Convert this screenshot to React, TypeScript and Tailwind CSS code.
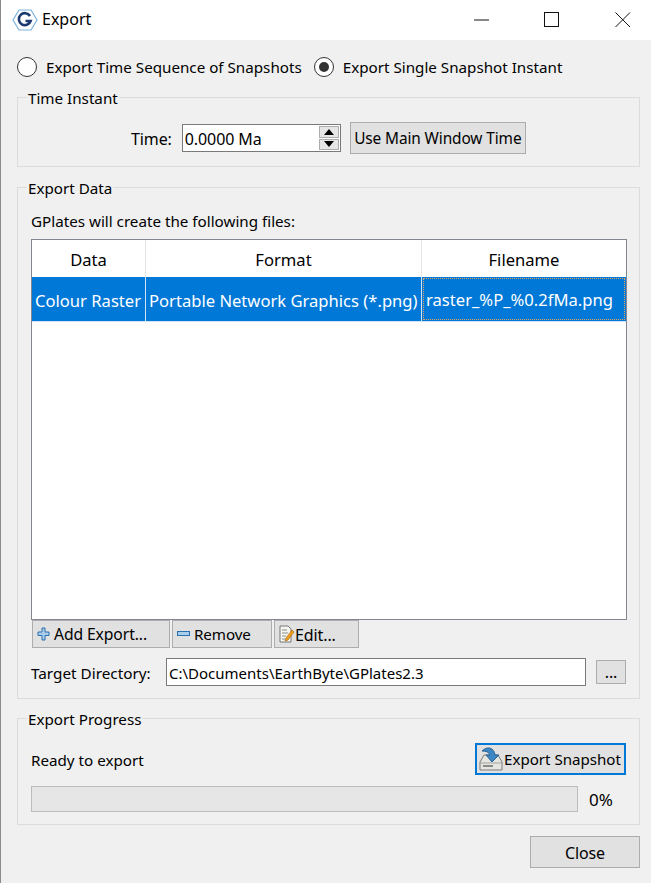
import React from 'react';

const btn = "flex items-center whitespace-nowrap bg-[#e1e1e1] border border-[#adadad] leading-none text-black tracking-[-0.1px]";

const GroupBox = ({ title, className, children }: { title: string; className: string; children: React.ReactNode }) => (
  <fieldset className={`border border-[#dcdcdc] ${className}`}>
    <legend className="ml-[9px] px-[1px] text-[15.2px] leading-[20px]">
      <span className="block translate-y-[1px]">{title}</span>
    </legend>
    {children}
  </fieldset>
);

const Radio = ({ checked }: { checked?: boolean }) => (
  <span className="w-[20px] h-[20px] rounded-full border border-[#333333] bg-white flex items-center justify-center shrink-0">
    {checked && <span className="w-[10px] h-[10px] rounded-full bg-[#333333]" />}
  </span>
);

const GLogo = () => (
  <svg width="26" height="22" viewBox="0 0 26 22" fill="none">
    <path d="M7 1 H19 L25 11 L19 21 H7 L1 11 Z" stroke="#7fb2dc" strokeWidth="1.2" fill="white" />
    <path d="M18 7 A6 6 0 1 0 18.6 12 H13.5" stroke="#1c3a70" strokeWidth="2.6" />
  </svg>
);

const ExportIcon = () => (
  <svg width="24" height="26" viewBox="0 0 24 26" className="shrink-0">
    <path d="M1 16 L5 9 H19 L23 16 V24 H1 Z" fill="#e6e6e0" stroke="#7a7a7a" />
    <path d="M1 17 H23" stroke="#a0a0a0" />
    <path d="M4 20 H14" stroke="#8a8a8a" strokeWidth="2" />
    <path d="M3 5 C8 0 15 1 16 9 H20 L13 16 L7 9 H11 C10 6 7 5 3 5 Z" fill="#3d87c4" stroke="#2a6496" />
  </svg>
);

const EditIcon = () => (
  <svg width="16" height="18" viewBox="0 0 16 18" className="shrink-0">
    <path d="M1 1 H9 L12 4 V17 H1 Z" fill="#f7f7f2" stroke="#777777" />
    <path d="M3 5 H8 M3 8 H9 M3 11 H7 M3 14 H6" stroke="#8a8a8a" />
    <path d="M7 13 L13 5 L15 7 L9 15 L6 16 Z" fill="#f0a020" stroke="#a86a10" strokeWidth="0.7" />
  </svg>
);

export default function App() {
  return (
    <div className="w-[651px] h-[883px] bg-[#f0f0f0] text-black text-[15.2px] font-['Noto_Sans','Open_Sans',sans-serif] overflow-hidden border-l border-[#8a8a8a]">
      {/* title bar */}
      <div className="h-[40px] bg-white flex items-center pl-[11px]">
        <GLogo />
        <span className="ml-[4px] text-[16px] mb-[2px]">Export</span>
        <div className="ml-auto flex items-center">
          <svg width="16" height="16" viewBox="0 0 16 16" className="mr-[54px]"><path d="M0 8 H15" stroke="#111" /></svg>
          <svg width="16" height="16" viewBox="0 0 16 16" className="mr-[55px]"><rect x="0.5" y="0.5" width="14" height="14" fill="none" stroke="#111" /></svg>
          <svg width="16" height="16" viewBox="0 0 16 16" className="mr-[20px]"><path d="M0.5 0.5 L15 15 M15 0.5 L0.5 15" stroke="#111" /></svg>
        </div>
      </div>

      {/* mode radios */}
      <div className="flex items-center h-[20px] mt-[17px] ml-[16px]">
        <Radio />
        <span className="ml-[9px] whitespace-nowrap">Export Time Sequence of Snapshots</span>
        <span className="ml-[12px]"><Radio checked /></span>
        <span className="ml-[9px] whitespace-nowrap">Export Single Snapshot Instant</span>
      </div>

      <GroupBox title="Time Instant" className="ml-[16px] mr-[11px] mt-[10px] h-[80px]">
        <div className="flex items-center mt-[15px] text-[16px] tracking-[-0.1px]">
          <span className="ml-[113px] pt-[2px]">Time:</span>
          <div className="ml-[10px] w-[159px] h-[28px] border border-[#7a7a7a] bg-white flex items-center">
            <span className="ml-[2px] pt-[2px]">0.0000 Ma</span>
            <div className="ml-auto mr-[1px] w-[20px] h-[24px] flex flex-col gap-[1px]">
              <div className="flex-1 bg-[#e6e6e6] border border-[#adadad] flex items-center justify-center">
                <span className="w-0 h-0 border-x-[5px] border-x-transparent border-b-[6px] border-b-black" />
              </div>
              <div className="flex-1 bg-[#e6e6e6] border border-[#adadad] flex items-center justify-center">
                <span className="w-0 h-0 border-x-[5px] border-x-transparent border-t-[6px] border-t-black" />
              </div>
            </div>
          </div>
          <button className={`${btn} ml-[9px] w-[176px] h-[32px] justify-center text-[15.4px] pt-[2px]`}>Use Main Window Time</button>
        </div>
      </GroupBox>

      <GroupBox title="Export Data" className="ml-[16px] mr-[11px] mt-[10px] h-[522px]">
        <div className="ml-[13px] mt-[12px] leading-[24px] h-[24px]">GPlates will create the following files:</div>
        <div className="ml-[13px] mt-[6px] w-[596px] h-[381px] border border-[#828790] bg-white text-[16.6px]">
          <div className="flex h-[37px] items-center text-center">
            <div className="w-[114px] h-full flex items-center justify-center border-r border-[#e4e4e4] pt-[3px]">Data</div>
            <div className="w-[276px] h-full flex items-center justify-center border-r border-[#e4e4e4] pt-[3px]">Format</div>
            <div className="flex-1 pt-[3px]">Filename</div>
          </div>
          <div className="flex h-[45px] bg-[#0078d7] text-white border-b border-[#cfe3f5] whitespace-nowrap">
            <div className="w-[114px] flex items-center pl-[3px] pt-[4px] border-r border-[#cfe3f5]">Colour Raster</div>
            <div className="w-[276px] flex items-center pl-[3px] pt-[4px] border-r border-[#cfe3f5]">Portable Network Graphics (*.png)</div>
            <div className="flex-1 flex items-center pl-[2px] pt-[3px] m-[1px] border border-dotted border-[#e9a45f]">raster_%P_%0.2fMa.png</div>
          </div>
        </div>
        <div className="flex ml-[14px] gap-[2px]">
          <button className={`${btn} w-[138px] h-[28px] pl-[4px] text-[15.7px]`}>
            <svg width="13" height="14" viewBox="0 0 13 14" className="mr-[4px]">
              <path d="M5 1 H8 V5 H12 V8.5 H8 V13 H5 V8.5 H1 V5 H5 Z" fill="#a9cdea" stroke="#2a6fae" />
            </svg>
            <span className="pt-[2px]">Add Export...</span>
          </button>
          <button className={`${btn} w-[100px] h-[28px] pl-[4px] text-[15.2px]`}>
            <svg width="13" height="6" viewBox="0 0 13 6" className="mr-[4px]">
              <rect x="0.5" y="0.5" width="12" height="4" fill="#a9cdea" stroke="#2a6fae" />
            </svg>
            <span className="pt-[2px]">Remove</span>
          </button>
          <button className={`${btn} w-[85px] h-[28px] pl-[4px] text-[16px]`}>
            <EditIcon />
            <span className="pt-[2px]">Edit...</span>
          </button>
        </div>
        <div className="flex items-center ml-[13px] mt-[10px]">
          <span className="w-[135px] text-[15.3px] pt-[2px]">Target Directory:</span>
          <div className="w-[420px] h-[28px] border border-[#7a7a7a] bg-white flex items-center pl-[2px] pt-[2px] text-[15px]">C:\Documents\EarthByte\GPlates2.3</div>
          <button className={`${btn} ml-[10px] w-[30px] h-[24px] justify-center text-[16px]`}>...</button>
        </div>
      </GroupBox>

      <GroupBox title="Export Progress" className="ml-[16px] mr-[11px] mt-[9px] h-[117px]">
        <div className="flex items-center ml-[13px] mt-[15px] h-[32px] mr-[13px]">
          <span className="pt-[2px]">Ready to export</span>
          <button className="ml-auto w-[151px] h-[32px] flex items-center whitespace-nowrap bg-[#e1e1e1] border-2 border-[#0078d7] pl-[2px] text-[15.1px] leading-none">
            <ExportIcon />
            <span className="ml-[1px] pt-[2px]">Export Snapshot</span>
          </button>
        </div>
        <div className="flex items-center ml-[13px] mt-[10px]">
          <div className="w-[547px] h-[26px] border border-[#bcbcbc] bg-[#e6e6e6]" />
          <span className="ml-[11px] text-[17px] pt-[2px]">0%</span>
        </div>
      </GroupBox>

      <div className="flex justify-end mt-[11px] mr-[11px]">
        <button className={`${btn} w-[110px] h-[32px] justify-center text-[16px] pt-[2px]`}>Close</button>
      </div>
    </div>
  );
}
